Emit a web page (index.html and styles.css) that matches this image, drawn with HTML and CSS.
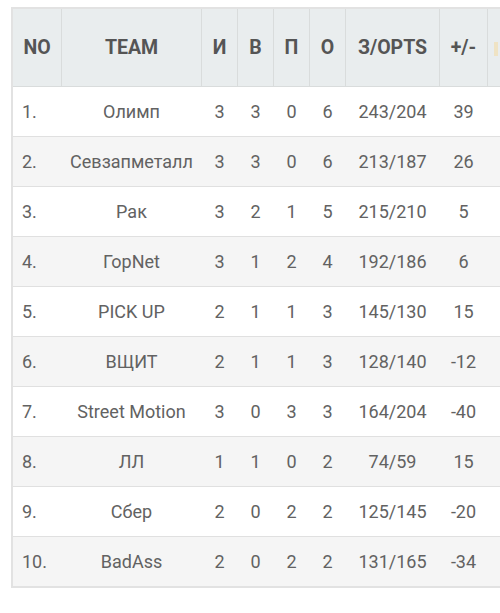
FILE: index.html
```html
<!DOCTYPE html>
<html>
<head>
<meta charset="utf-8">
<link rel="stylesheet" href="styles.css">
</head>
<body>
<div class="wrap">
<table class="standings">
  <thead>
    <tr>
      <th class="c-no">NO</th>
      <th class="c-team">TEAM</th>
      <th class="c-s">И</th>
      <th class="c-s">В</th>
      <th class="c-s">П</th>
      <th class="c-s">О</th>
      <th class="c-pts">З/OPTS</th>
      <th class="c-diff">+/-</th>
      <th class="c-extra"><span class="mark"></span></th>
    </tr>
  </thead>
  <tbody>
    <tr><td class="c-no">1.</td><td>Олимп</td><td>3</td><td>3</td><td>0</td><td>6</td><td>243/204</td><td>39</td><td></td></tr>
    <tr><td class="c-no">2.</td><td>Севзапметалл</td><td>3</td><td>3</td><td>0</td><td>6</td><td>213/187</td><td>26</td><td></td></tr>
    <tr><td class="c-no">3.</td><td>Рак</td><td>3</td><td>2</td><td>1</td><td>5</td><td>215/210</td><td>5</td><td></td></tr>
    <tr><td class="c-no">4.</td><td>ГорNet</td><td>3</td><td>1</td><td>2</td><td>4</td><td>192/186</td><td>6</td><td></td></tr>
    <tr><td class="c-no">5.</td><td>PICK UP</td><td>2</td><td>1</td><td>1</td><td>3</td><td>145/130</td><td>15</td><td></td></tr>
    <tr><td class="c-no">6.</td><td>ВЩИТ</td><td>2</td><td>1</td><td>1</td><td>3</td><td>128/140</td><td>-12</td><td></td></tr>
    <tr><td class="c-no">7.</td><td>Street Motion</td><td>3</td><td>0</td><td>3</td><td>3</td><td>164/204</td><td>-40</td><td></td></tr>
    <tr><td class="c-no">8.</td><td>ЛЛ</td><td>1</td><td>1</td><td>0</td><td>2</td><td>74/59</td><td>15</td><td></td></tr>
    <tr><td class="c-no">9.</td><td>Сбер</td><td>2</td><td>0</td><td>2</td><td>2</td><td>125/145</td><td>-20</td><td></td></tr>
    <tr><td class="c-no">10.</td><td>BadAss</td><td>2</td><td>0</td><td>2</td><td>2</td><td>131/165</td><td>-34</td><td></td></tr>
  </tbody>
</table>
</div>
</body>
</html>
```
FILE: styles.css
```css
html, body {
  margin: 0;
  padding: 0;
  background: #ffffff;
  overflow: hidden;
}
.wrap {
  padding: 7px 0 0 11px;
  width: 560px;
}
.standings {
  border-collapse: collapse;
  table-layout: fixed;
  width: 540px;
  font-family: Roboto, "Liberation Sans", sans-serif;
  color: #626262;
  font-size: 18px;
  border: 2px solid #e2e2e2;
}
.standings th,
.standings td {
  border: 1px solid #e0e0e0;
  text-align: center;
  padding: 0;
  white-space: nowrap;
}
.standings thead th {
  background: #e9edee;
  height: 77px;
  font-weight: 700;
  font-size: 19.5px;
  color: #555;
  border-color: #d9dcdc;
}
.standings tbody td {
  height: 49px;
  border-left-color: transparent;
  border-right-color: transparent;
}
.standings tbody tr:nth-child(odd) td {
  background: #ffffff;
}
.standings tbody tr:nth-child(even) td {
  background: #f5f5f5;
}
.standings .c-no {
  width: 48px;
}
.standings td.c-no {
  text-align: left;
  padding-left: 9px;
  width: 39px;
}
.standings .c-team { width: 139px; }
.standings .c-s { width: 35px; }
.standings .c-pts { width: 93px; }
.standings .c-diff { width: 47px; }
.standings .c-extra { text-align: left; }
.mark {
  display: inline-block;
  width: 4px;
  height: 14px;
  margin-left: 6px;
  background: #efe3c4;
  vertical-align: middle;
}
```
